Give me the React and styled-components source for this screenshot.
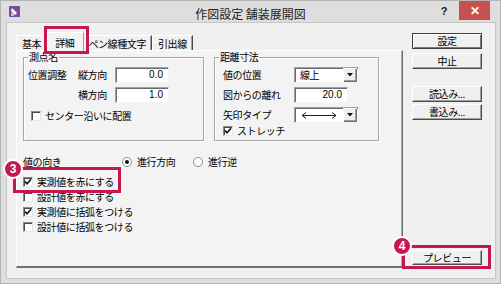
import React from 'react';
import styled, { createGlobalStyle } from 'styled-components';

const Global = createGlobalStyle`
  html, body { margin: 0; padding: 0; background: #fff; }
  body { font-family: "Noto Sans CJK JP", "Noto Sans", sans-serif; font-size: 10px; letter-spacing: -0.4px; color: #000; }
  * { box-sizing: border-box; }
`;

const Window = styled.div`
  position: relative;
  width: 501px;
  height: 284px;
  background: #dedede;
  border: 1px solid #b5b5b5;
  display: flex;
  flex-direction: column;
`;

const TitleBar = styled.div`
  height: 21px;
  display: grid;
  grid-template-columns: 1fr auto 1fr;
  align-items: center;
`;

const AppIcon = styled.div`
  padding-left: 8px;
  display: flex;
  align-items: center;
`;

const Title = styled.div`
  font-size: 12px;
  letter-spacing: 0;
  line-height: 14px;
  color: #222;
  padding-top: 4px;
`;

const Controls = styled.div`
  display: flex;
  justify-content: flex-end;
  align-items: flex-start;
  align-self: start;
  margin-right: 10px;
`;

const Help = styled.div`
  font-family: "Liberation Sans", sans-serif;
  font-weight: bold;
  font-size: 11px;
  margin: 4px 12px 0 0;
  color: #222;
`;

const CloseBtn = styled.div`
  width: 31px;
  height: 19px;
  background: #c75050;
  color: #fff;
  display: flex;
  align-items: center;
  justify-content: center;
  font-family: "Liberation Sans", sans-serif;
  font-weight: bold;
  font-size: 12px;
`;

const Client = styled.div`
  flex: 1;
  margin: 0 4px 4px 5px;
  border: 1px solid #c6c6c6;
  background: #f0f0f0;
  display: flex;
  gap: 9px;
  padding: 10px 13px 10px 9px;
`;

const LeftCol = styled.div`
  width: 387px;
  display: flex;
  flex-direction: column;
`;

const TabStrip = styled.div`
  height: 17px;
  display: flex;
  align-items: flex-end;
`;

const Tab = styled.div`
  position: relative;
  height: ${p => (p.$active ? 19 : 15)}px;
  padding: 0 ${p => (p.$active ? 9 : 5)}px;
  margin: 0 ${p => (p.$active ? -2 : 0)}px ${p => (p.$active ? -1 : 0)}px;
  z-index: ${p => (p.$active ? 1 : 0)};
  display: flex;
  align-items: center;
  background: ${p => (p.$active ? '#f3f3f3' : 'transparent')};
  border-top: 1px solid #fff;
  border-left: 1px solid #fff;
  border-right: 1px solid ${p => (p.$edge ? '#4a4a4a' : '#9a9a9a')};
  box-shadow: ${p => (p.$edge ? 'inset -1px 0 0 #a0a0a0' : 'none')};
  white-space: nowrap;
`;

const Page = styled.div`
  flex: 1;
  background: #f3f3f3;
  border-top: 1px solid #fff;
  border-left: 1px solid #fff;
  border-right: 1px solid #6b6b6b;
  border-bottom: 2px solid #707070;
  box-shadow: inset -1px 0 0 #a9a9a9;
  padding: 0 6px;
`;

const GroupRow = styled.div`
  display: flex;
  gap: 10px;
`;

const Group = styled.fieldset`
  margin: 0;
  width: ${p => p.$w}px;
  height: 90px;
  padding: 4px 4px 0 ${p => p.$pl}px;
  border: 1px solid #a6a6a6;
  box-shadow: inset 1px 1px 0 #fff, 1px 1px 0 #fff;
  min-width: 0;
`;

const Legend = styled.legend`
  padding: 0 1px;
  margin-left: ${p => p.$ml}px;
  font-size: 10px;
  line-height: 12px;
`;

const FieldGrid = styled.div`
  display: grid;
  grid-template-columns: ${p => p.$cols};
  grid-auto-rows: 16px;
  row-gap: 4px;
  align-items: center;
`;

const Label = styled.span`
  white-space: nowrap;
  line-height: 12px;
`;

const Sunken = styled.div`
  height: 16px;
  width: ${p => p.$w}px;
  background: #fff;
  border: 1px solid;
  border-color: #a0a0a0 #f4f4f4 #f4f4f4 #a0a0a0;
  box-shadow: inset 1px 1px 0 #6b6b6b;
`;

const NumInput = styled(Sunken)`
  text-align: right;
  padding-right: 5px;
  line-height: 14px;
  font-family: "Liberation Sans", sans-serif;
  font-size: 10px;
  letter-spacing: 0;
`;

const Select = styled(Sunken)`
  display: flex;
  align-items: center;
`;

const SelectValue = styled.div`
  flex: 1;
  padding-left: 5px;
  line-height: 12px;
  display: flex;
  align-items: center;
`;

const DropBtn = styled.div`
  width: 14px;
  height: 14px;
  margin: 0 1px 0 0;
  background: #f0f0f0;
  box-shadow: inset 1px 1px 0 #fff, inset -1px -1px 0 #6b6b6b, inset -2px -2px 0 #a0a0a0;
  display: flex;
  align-items: center;
  justify-content: center;
`;

const CheckRow = styled.div`
  display: flex;
  align-items: center;
  gap: ${p => p.$gap ?? 4}px;
  height: ${p => p.$h ?? 15}px;
  margin-top: ${p => p.$mt ?? 0}px;
  padding-left: ${p => p.$pl ?? 0}px;
  line-height: 12px;
  white-space: nowrap;
`;

const Box = styled.div`
  width: 10px;
  height: 10px;
  flex: none;
  background: #fff;
  border: 1px solid;
  border-color: #8a8a8a #e6e6e6 #e6e6e6 #8a8a8a;
  box-shadow: inset 1px 1px 0 #4a4a4a;
  display: flex;
  align-items: center;
  justify-content: center;
`;

const Round = styled.div`
  width: 10px;
  height: 10px;
  flex: none;
  border-radius: 50%;
  background: #fff;
  border: 1px solid #8a8a8a;
  display: flex;
  align-items: center;
  justify-content: center;
`;

const Dot = styled.div`
  width: 4px;
  height: 4px;
  border-radius: 50%;
  background: #111;
`;

const DirRow = styled.div`
  display: grid;
  grid-template-columns: 99px 71px auto;
  align-items: center;
  height: 12px;
  margin-top: 15px;
  line-height: 12px;
`;

const RadioItem = styled.div`
  display: flex;
  align-items: center;
  gap: 5px;
  white-space: nowrap;
`;

const CheckList = styled.div`
  display: flex;
  flex-direction: column;
  margin-top: 6px;
`;

const RightCol = styled.div`
  width: 70px;
  display: flex;
  flex-direction: column;
  padding-bottom: 3px;
`;

const Button = styled.div`
  height: ${p => p.$h ?? 16}px;
  margin-top: ${p => p.$mt ?? 0}px;
  background: #f0f0f0;
  border: 1px solid;
  border-color: ${p => (p.$def ? '#3c3c3c' : '#fff #4a4a4a #4a4a4a #fff')};
  box-shadow: ${p => (p.$def
    ? 'inset 1px 1px 0 #fff, inset -1px -1px 0 #7a7a7a'
    : 'inset -1px -1px 0 #a0a0a0')};
  display: flex;
  align-items: center;
  justify-content: center;
  line-height: 12px;
  white-space: nowrap;
`;

const Spacer = styled.div`
  flex: 1;
`;

const Highlight = styled.div`
  position: absolute;
  left: ${p => p.$x}px;
  top: ${p => p.$y}px;
  width: ${p => p.$w}px;
  height: ${p => p.$h}px;
  border: 3px solid #c7174f;
  pointer-events: none;
  z-index: 5;
`;

const Badge = styled.div`
  position: absolute;
  left: ${p => p.$x - 10}px;
  top: ${p => p.$y - 10}px;
  width: 20px;
  height: 20px;
  border-radius: 50%;
  background: #c7174f;
  border: 2px solid #fff;
  color: #fff;
  font-family: "Liberation Sans", "DejaVu Sans", sans-serif;
  font-weight: bold;
  font-size: 12px;
  letter-spacing: 0;
  display: flex;
  align-items: center;
  justify-content: center;
  z-index: 6;
`;

const Check = () => (
  <svg width="8" height="8" viewBox="0 0 8 8">
    <path d="M1 3.5 L3 5.8 L7 1.2" fill="none" stroke="#111" strokeWidth="1.6" />
  </svg>
);

const CheckBox = ({ checked, children, ...rest }) => (
  <CheckRow {...rest}>
    <Box>{checked && <Check />}</Box>
    <span>{children}</span>
  </CheckRow>
);

const Arrow = () => (
  <svg width="6" height="4" viewBox="0 0 6 4">
    <path d="M0 0 H6 L3 3.5 Z" fill="#111" />
  </svg>
);

const LineArrow = () => (
  <svg width="38" height="9" viewBox="0 0 38 9">
    <path d="M2 4.5 H36 M6 1.5 L2 4.5 L6 7.5 M32 1.5 L36 4.5 L32 7.5" fill="none" stroke="#222" strokeWidth="1" />
  </svg>
);

export default function App() {
  return (
    <>
      <Global />
      <Window>
        <TitleBar>
          <AppIcon>
            <svg width="11" height="11" viewBox="0 0 11 11">
              <rect x="0" y="0" width="11" height="11" rx="1" fill="#7a4a9c" />
              <path d="M3 2 L8 7 L6 9 L2 5 Z" fill="#fff" />
              <rect x="2" y="7" width="3" height="3" fill="#c9b6dc" />
            </svg>
          </AppIcon>
          <Title>作図設定 舗装展開図</Title>
          <Controls>
            <Help>?</Help>
            <CloseBtn>✕</CloseBtn>
          </Controls>
        </TitleBar>
        <Client>
          <LeftCol>
            <TabStrip>
              <Tab>基本</Tab>
              <Tab $active>詳細</Tab>
              <Tab $edge>ペン線種文字</Tab>
              <Tab $edge>引出線</Tab>
            </TabStrip>
            <Page>
              <GroupRow>
                <Group $w={181} $pl={4}>
                  <Legend $ml={0}>測点名</Legend>
                  <FieldGrid $cols="50px 37px 54px">
                    <Label>位置調整</Label>
                    <Label>縦方向</Label>
                    <NumInput $w={54}>0.0</NumInput>
                    <span />
                    <Label>横方向</Label>
                    <NumInput $w={54}>1.0</NumInput>
                  </FieldGrid>
                  <CheckBox $mt={7} $pl={3} $h={12}>センター沿いに配置</CheckBox>
                </Group>
                <Group $w={165} $pl={8}>
                  <Legend $ml={-4}>距離寸法</Legend>
                  <FieldGrid $cols="71px auto">
                    <Label>値の位置</Label>
                    <Select $w={65}>
                      <SelectValue>線上</SelectValue>
                      <DropBtn><Arrow /></DropBtn>
                    </Select>
                    <Label>図からの離れ</Label>
                    <NumInput $w={54}>20.0</NumInput>
                    <Label>矢印タイプ</Label>
                    <Select $w={65}>
                      <SelectValue><LineArrow /></SelectValue>
                      <DropBtn><Arrow /></DropBtn>
                    </Select>
                  </FieldGrid>
                  <CheckBox checked $mt={2} $h={12}>ストレッチ</CheckBox>
                </Group>
              </GroupRow>
              <DirRow>
                <Label>値の向き</Label>
                <RadioItem><Round><Dot /></Round>進行方向</RadioItem>
                <RadioItem><Round />進行逆</RadioItem>
              </DirRow>
              <CheckList>
                <CheckBox checked>実測値を赤にする</CheckBox>
                <CheckBox>設計値を赤にする</CheckBox>
                <CheckBox checked>実測値に括弧をつける</CheckBox>
                <CheckBox>設計値に括弧をつける</CheckBox>
              </CheckList>
            </Page>
          </LeftCol>
          <RightCol>
            <Button $def>設定</Button>
            <Button $mt={4}>中止</Button>
            <Button $mt={17}>読込み...</Button>
            <Button $mt={2}>書込み...</Button>
            <Spacer />
            <Button $h={15}>プレビュー</Button>
          </RightCol>
        </Client>
        <Highlight $x={43} $y={25} $w={45} $h={28} />
        <Highlight $x={12} $y={166} $w={108} $h={26} />
        <Highlight $x={401} $y={244} $w={89} $h={24} />
        <Badge $x={12} $y={168}>3</Badge>
        <Badge $x={401} $y={245}>4</Badge>
      </Window>
    </>
  );
}
